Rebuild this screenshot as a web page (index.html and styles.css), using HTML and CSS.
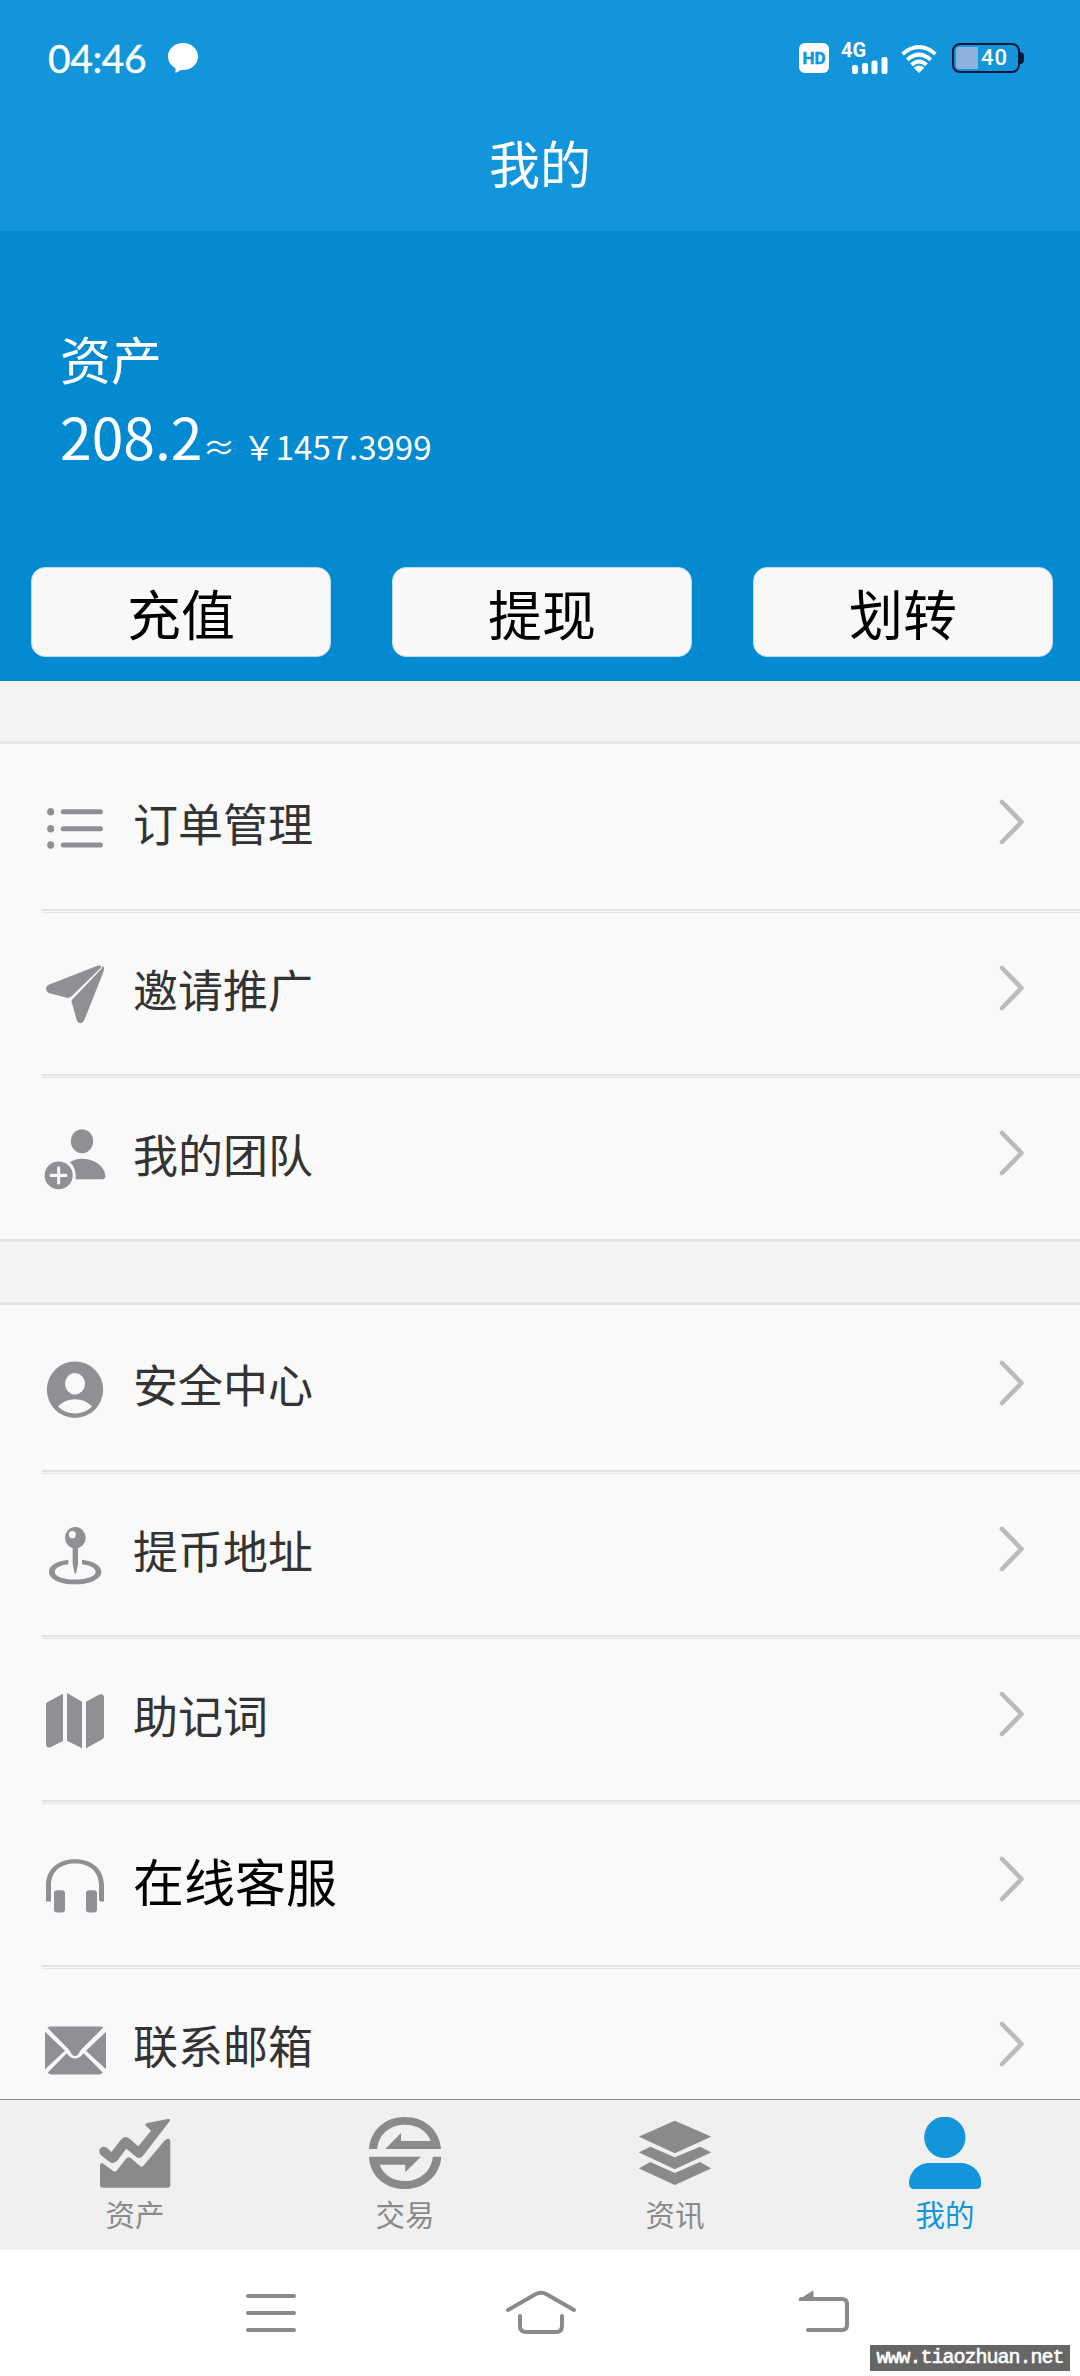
FILE: index.html
```html
<!DOCTYPE html>
<html lang="zh-CN">
<head>
<meta charset="utf-8">
<title>我的</title>
<link rel="stylesheet" href="styles.css">
</head>
<body>
<div class="screen">
  <header class="header">
    <div class="status">
      <span class="clock">04:46</span>
      <svg class="bubble" viewBox="0 0 30 30"><path d="M15 0C23.500 0 30 6 30 13.500S23.500 27 15 27H13L7.500 30V25C3 23 0 18.500 0 13.500C0 6 6.500 0 15 0Z"/></svg>
      <span class="hd">HD</span>
      <div class="signal">
        <span class="net">4G</span>
        <svg class="bars" viewBox="0 0 36 17"><rect x="0" y="8" width="6" height="9" rx="2"/><rect x="10" y="6" width="6" height="11" rx="2"/><rect x="19.500" y="3.500" width="6" height="13.500" rx="2"/><rect x="29.500" y="0" width="6" height="17" rx="2"/></svg>
      </div>
      <svg class="wifi" viewBox="0 0 36 28"><path d="M18 28L12.700 22.700Q18 18.500 23.300 22.700Z"/><path class="arc" d="M10.500 19.800Q18 13.200 25.500 19.800M6.200 14.700Q18 4.500 29.800 14.700M1.600 9Q18 -5 34.400 9"/></svg>
      <div class="battery"><span class="level"></span><span class="percent">40</span></div>
    </div>
    <h1 class="title">我的</h1>
  </header>

  <section class="assets">
    <div class="assets-label">资产</div>
    <div class="balance"><span class="amount">208.2</span><span class="fiat">≈ ￥1457.3999</span></div>
    <div class="actions">
      <button class="action">充值</button>
      <button class="action">提现</button>
      <button class="action">划转</button>
    </div>
  </section>

  <main class="lists">
    <ul class="group">
      <li class="row">
        <svg class="icon" viewBox="135 220 180 168" preserveAspectRatio="none"><circle cx="152" cy="256" r="10.500"/><circle cx="152" cy="303" r="10.500"/><circle cx="152" cy="349" r="10.500"/><rect x="182" y="249" width="127" height="14" rx="7"/><rect x="182" y="296" width="127" height="14" rx="7"/><rect x="182" y="342" width="127" height="14" rx="7"/></svg>
        <span class="label">订单管理</span>
        <svg class="chevron" viewBox="0 0 26 46"><path d="M3 3L22.500 23L3 43"/></svg>
      </li>
      <li class="row">
        <svg class="icon" viewBox="135 682 180 168" preserveAspectRatio="none"><path d="M146 740L292 687Q306 683 302 693L214 773Q206 779 198 776L146 763Q138 760 138 751Q138 743 146 740Z"/><path d="M303 697L216 782Q213 788 217 795L230 838Q233 848 242 848Q249 848 253 839L310 705Q315 692 308 687Q306 692 303 697Z"/></svg>
        <span class="label">邀请推广</span>
        <svg class="chevron" viewBox="0 0 26 46"><path d="M3 3L22.500 23L3 43"/></svg>
      </li>
      <li class="row">
        <svg class="icon" viewBox="135 1144 180 168" preserveAspectRatio="none"><circle cx="246" cy="1178.500" r="33.500"/><path d="M210 1237Q224 1227 246 1227C290 1228 316 1253 316 1276Q316 1285 303 1285H227Q230 1253 210 1237Z"/><ellipse cx="176" cy="1274" rx="42" ry="39"/><path class="cut" d="M176 1253V1295M153 1274H198"/></svg>
        <span class="label">我的团队</span>
        <svg class="chevron" viewBox="0 0 26 46"><path d="M3 3L22.500 23L3 43"/></svg>
      </li>
    </ul>
    <ul class="group">
      <li class="row">
        <svg class="icon" viewBox="135 231 180 174" preserveAspectRatio="none"><ellipse cx="225" cy="317" rx="84.500" ry="82"/><ellipse class="hole" cx="225" cy="300" rx="30" ry="31"/><path class="hole" d="M174 366Q194 345 225 345T276 366Q255 386 225 386T174 366Z"/></svg>
        <span class="label">安全中心</span>
        <svg class="chevron" viewBox="0 0 26 46"><path d="M3 3L22.500 23L3 43"/></svg>
      </li>
      <li class="row">
        <svg class="icon" viewBox="135 710 180 174" preserveAspectRatio="none"><circle cx="226" cy="747" r="31"/><circle class="hole" cx="217" cy="738" r="10.500"/><path d="M218 774H234V822L229 848Q226 855 223 848L218 822Z"/><path d="M205 811C170 815 147 828 147 846C147 867 181 882 225 882S304 867 304 846C304 828 281 815 246 811V824C270 827 287 835 287 846C287 859 260 868 225 868S164 859 164 846C164 835 181 827 205 824Z"/></svg>
        <span class="label">提币地址</span>
        <svg class="chevron" viewBox="0 0 26 46"><path d="M3 3L22.500 23L3 43"/></svg>
      </li>
      <li class="row">
        <svg class="icon" viewBox="135 1189 180 174" preserveAspectRatio="none"><path d="M189 1200V1337L151 1355Q138 1358 138 1345V1231Q138 1226 143 1224ZM201 1198L246 1223V1358L201 1336ZM258 1223L298 1202Q312 1198 312 1211V1323Q312 1329 307 1332L258 1358Z"/></svg>
        <span class="label">助记词</span>
        <svg class="chevron" viewBox="0 0 26 46"><path d="M3 3L22.500 23L3 43"/></svg>
      </li>
      <li class="row">
        <svg class="icon" viewBox="135 163.500 180 180" preserveAspectRatio="none"><path d="M138 303V255C138 206 174 176 225 176S312 206 312 255V303H303Q297 303 297 297V255C297 212 267 189 225 189S153 212 153 255V303Z"/><rect x="162" y="269" width="33" height="67" rx="9"/><rect x="258" y="269" width="33" height="67" rx="9"/></svg>
        <span class="label label-strong">在线客服</span>
        <svg class="chevron" viewBox="0 0 26 46"><path d="M3 3L22.500 23L3 43"/></svg>
      </li>
      <li class="row">
        <svg class="icon" viewBox="135 658.500 180 180" preserveAspectRatio="none"><path d="M142 681Q147 678 153 678H299Q305 678 310 681L243 748L234 762Q225 771 216 762L207 748ZM135 694L195 751L135 806ZM318 694V806L258 751ZM143 817L200 758L208 767Q225 781 242 767L251 758L309 817Q304 822 297 822H155Q147 822 143 817Z"/></svg>
        <span class="label">联系邮箱</span>
        <svg class="chevron" viewBox="0 0 26 46"><path d="M3 3L22.500 23L3 43"/></svg>
      </li>
    </ul>
  </main>

  <nav class="tabs">
    <a class="tab">
      <svg class="tab-icon" viewBox="287 111 209 216" preserveAspectRatio="none"><path d="M292 204Q302 196 312 205L323 216L350 180Q362 164 376 176L401 199L438 152L424 139Q418 132 427 129L488 117Q496 117 492 124L415 227Q405 240 393 229L366 206L342 240Q329 256 315 244L293 226Q283 214 292 204Z"/><path d="M290 254Q292 246 300 251L329 274Q334 278 339 271L367 235Q373 229 380 235L406 258Q412 263 417 256L477 182Q490 171 494 182V315Q494 323 486 323H299Q290 323 290 315Z"/></svg>
      <span>资产</span>
    </a>
    <a class="tab">
      <svg class="tab-icon" viewBox="1071 111 209 216" preserveAspectRatio="none"><path d="M1071 207C1075 150 1118 111 1175 111S1276 150 1280 207H1118L1164 159V183H1250C1241 154 1212 134 1175 134C1131 134 1098 164 1095 207Z"/><path d="M1071 230H1222L1176 277V254H1102C1113 285 1142 303 1175 303C1220 303 1252 273 1256 230H1281C1277 286 1233 327 1175 327S1073 286 1071 230Z"/></svg>
      <span>交易</span>
    </a>
    <a class="tab">
      <svg class="tab-icon" viewBox="287 111 209 216" preserveAspectRatio="none"><path d="M391 122L497 170L391 220L286 170ZM320 200L391 232L464 200L497 217L391 268L286 217ZM320 246L391 279L464 246L497 265L391 315L286 265Z"/></svg>
      <span>资讯</span>
    </a>
    <a class="tab active">
      <svg class="tab-icon" viewBox="1071 111 209 216" preserveAspectRatio="none"><ellipse cx="1175" cy="172" rx="60" ry="62"/><path d="M1130 249H1221C1257 249 1281 280 1281 309Q1281 327 1266 327H1086Q1071 327 1071 309C1071 280 1095 249 1130 249Z"/></svg>
      <span>我的</span>
    </a>
  </nav>

  <footer class="system">
    <svg class="key" viewBox="0 0 80 80"><path d="M17 23H63M17 40H63M17 57H63"/></svg>
    <svg class="key" viewBox="0 0 80 80"><path d="M7 37L34 21.500Q40 18 46 21.500L73 37M19 43V53Q19 59 25 59H55Q61 59 61 53V43"/></svg>
    <svg class="key" viewBox="0 0 80 80"><path d="M30 26H71Q76 26 76 31V52Q76 57 71 57H37"/><path class="tip" d="M28 27L42 18V27Z"/></svg>
    <span class="watermark">www.tiaozhuan.net</span>
  </footer>
</div>
</body>
</html>
```
FILE: styles.css
```css
* {
  box-sizing: border-box;
}

body {
  margin: 0;
  font-family: "Noto Sans CJK SC", sans-serif;
}

.screen {
  width: 1080px;
  height: 2376px;
  display: flex;
  flex-direction: column;
  overflow: hidden;
  background: #f3f4f6;
}

/* Header with the phone status bar */
.header {
  height: 231px;
  flex: none;
  background: #1295db;
  color: #fff;
}

.status {
  height: 116px;
  padding: 0 56px 0 48px;
  display: flex;
  align-items: center;
  fill: #fff;
}

.clock {
  width: 120px;
  font: 39px/48px Lato, sans-serif;
  letter-spacing: -0.4px;
  -webkit-text-stroke: 0.4px #fff;
}

.bubble {
  width: 30px;
  height: 30px;
}

.hd {
  width: 30px;
  height: 30px;
  margin-left: auto;
  border-radius: 6px;
  background: #fff;
  color: #1295db;
  font: bold 17px/31px Roboto, sans-serif;
  text-align: center;
  -webkit-text-stroke: 0.5px #1295db;
}

.signal {
  width: 47px;
  height: 30px;
  margin-left: 12px;
  display: flex;
  flex-direction: column;
}

.net {
  height: 14px;
  font: bold 20px/15px Roboto, sans-serif;
}

.bars {
  width: 36px;
  height: 17px;
  align-self: flex-end;
  flex: none;
}

.wifi {
  width: 36px;
  height: 28px;
  margin: 2px 15px 0 13px;
}

.arc {
  fill: none;
  stroke: #fff;
  stroke-width: 4;
}

.battery {
  position: relative;
  width: 68px;
  height: 30px;
  margin-right: 4px;
  padding: 2px;
  border: 2px solid #0d1838;
  border-radius: 8px;
  display: flex;
  align-items: center;
}

.battery::after {
  content: "";
  position: absolute;
  right: -6px;
  top: 7px;
  width: 4px;
  height: 12px;
  border-radius: 0 4px 4px 0;
  background: #0d1838;
}

.level {
  width: 22px;
  height: 22px;
  border-radius: 3px 0 0 3px;
  background: #8eb0dd;
}

.percent {
  margin-left: 3px;
  font: 500 22px/22px Roboto, sans-serif;
  letter-spacing: 1px;
}

.title {
  margin: 0;
  padding-top: 9px;
  font-size: 51px;
  font-weight: 400;
  line-height: 74px;
  text-align: center;
}

/* Balance panel */
.assets {
  height: 450px;
  flex: none;
  padding: 90px 27px 0 31px;
  background: #048ad1;
  color: #fff;
}

.assets-label {
  padding-left: 29px;
  font-size: 51px;
  line-height: 74px;
}

.balance {
  height: 84px;
  padding-left: 29px;
  line-height: 80px;
  white-space: nowrap;
}

.amount {
  font-size: 57px;
}

.fiat {
  font-size: 33px;
}

.actions {
  margin-top: 88px;
  display: flex;
  justify-content: space-between;
}

.action {
  width: 300px;
  height: 90px;
  padding: 1px 0 0;
  border: 1px solid #b9dcf2;
  border-radius: 14px;
  background: #f8f8f8;
  color: #000;
  font: 54px/87px "Noto Sans CJK SC", sans-serif;
}

/* Menu lists */
.lists {
  flex: 1;
  min-height: 0;
  overflow: hidden;
}

.group {
  margin: 60px 0 0;
  padding: 0;
  list-style: none;
  border-top: 3px solid #e5e6e7;
  border-bottom: 3px solid #e5e6e7;
  background: #f9f9f9;
}

.row {
  height: 165px;
  padding: 4px 55px 0 45px;
  display: flex;
  align-items: center;
}

.row + .row {
  background: linear-gradient(#e3e3e4 0 2px, #f6f6f6 2px 3px, #e6e6e7 3px 4px) 42px 0 / 100% 4px no-repeat;
}

.icon {
  width: 60px;
  height: 60px;
  overflow: visible;
  fill: #909094;
}

.hole {
  fill: #f9f9f9;
}

.cut {
  fill: none;
  stroke: #f9f9f9;
  stroke-width: 9;
  stroke-linecap: round;
}

.label {
  flex: 1;
  margin-left: 28px;
  padding-bottom: 11px;
  color: #333;
  font-size: 45px;
  line-height: 66px;
}

.row + .row .label {
  padding-bottom: 9px;
}

.label-strong {
  color: #000;
  font-size: 51px;
}

.chevron {
  width: 26px;
  height: 46px;
  margin-bottom: 13px;
  fill: none;
  stroke: #bbb;
  stroke-width: 4.6;
  stroke-linecap: round;
  stroke-linejoin: round;
}

.row + .row .chevron {
  margin-bottom: 11px;
}

/* Bottom tabs */
.tabs {
  height: 151px;
  flex: none;
  padding-top: 17px;
  display: flex;
  border-top: 1px solid #929296;
  background: #f0f0f0;
  color: #8a8a8a;
  fill: #8a8a8a;
}

.tab {
  flex: 1;
  display: flex;
  flex-direction: column;
  align-items: center;
  font-size: 29.5px;
  line-height: 44px;
}

.tab span {
  margin-top: 2px;
}

.tab-icon {
  width: 72px;
  height: 72px;
}

.active {
  color: #1295db;
  fill: #1295db;
}

/* Android navigation keys */
.system {
  position: relative;
  height: 126px;
  flex: none;
  padding: 23px 0 0 231px;
  display: flex;
  gap: 190px;
  background: #fff;
}

.key {
  width: 80px;
  height: 80px;
  fill: none;
  stroke: #8a8a8a;
  stroke-width: 4;
  stroke-linecap: round;
}

.tip {
  fill: #8a8a8a;
  stroke-width: 1;
}

.watermark {
  position: absolute;
  right: 10px;
  bottom: 5px;
  width: 200px;
  height: 26px;
  background: #666;
  color: #fff;
  font: 20px/26px "Liberation Mono", monospace;
  letter-spacing: -1px;
  text-align: center;
  -webkit-text-stroke: 0.6px #fff;
}
```
